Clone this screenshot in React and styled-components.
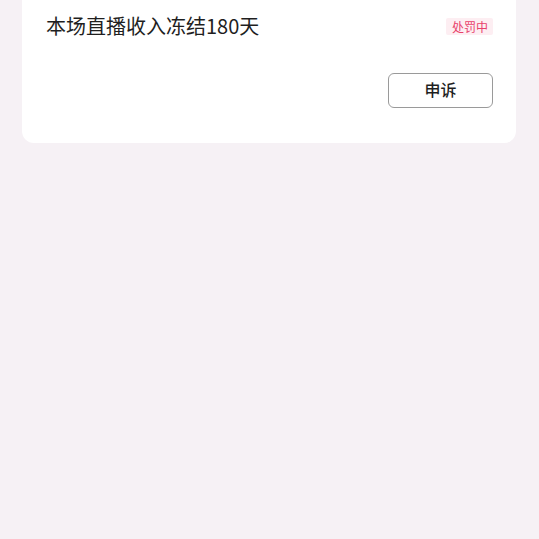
import React from "react";
import styled, { createGlobalStyle } from "styled-components";

const GlobalStyle = createGlobalStyle`
  html, body {
    margin: 0;
    padding: 0;
    background: #f6f1f5;
    font-family: "Noto Sans CJK SC", "Noto Sans", sans-serif;
  }
`;

const Page = styled.div`
  min-height: 539px;
  padding: 0 23px 0 22px;
  background: #f6f1f5;
`;

const Card = styled.div`
  background: #ffffff;
  border-radius: 0 0 12px 12px;
  padding: 10px 23px 35px 24px;
`;

const Header = styled.div`
  display: flex;
  align-items: center;
  justify-content: space-between;
`;

const Title = styled.div`
  font-size: 20px;
  line-height: 32px;
  color: #1f1f1f;
`;

const Badge = styled.span`
  font-size: 12px;
  line-height: 17px;
  padding: 0 5px 0 6px;
  border-radius: 2px;
  color: #e8416a;
  background: #fdeef2;
`;

const Actions = styled.div`
  display: flex;
  justify-content: flex-end;
  margin-top: 31px;
`;

const AppealButton = styled.button`
  width: 105px;
  height: 35px;
  border: 1px solid #9a9a9a;
  border-radius: 6px;
  background: #fff;
  font-family: inherit;
  font-size: 16px;
  line-height: 20px;
  font-weight: 500;
  color: #1f1f1f;
  padding: 0 0 3px;
`;

export default function App() {
  return (
    <>
      <GlobalStyle />
      <Page>
        <Card>
          <Header>
            <Title>本场直播收入冻结180天</Title>
            <Badge>处罚中</Badge>
          </Header>
          <Actions>
            <AppealButton>申诉</AppealButton>
          </Actions>
        </Card>
      </Page>
    </>
  );
}
